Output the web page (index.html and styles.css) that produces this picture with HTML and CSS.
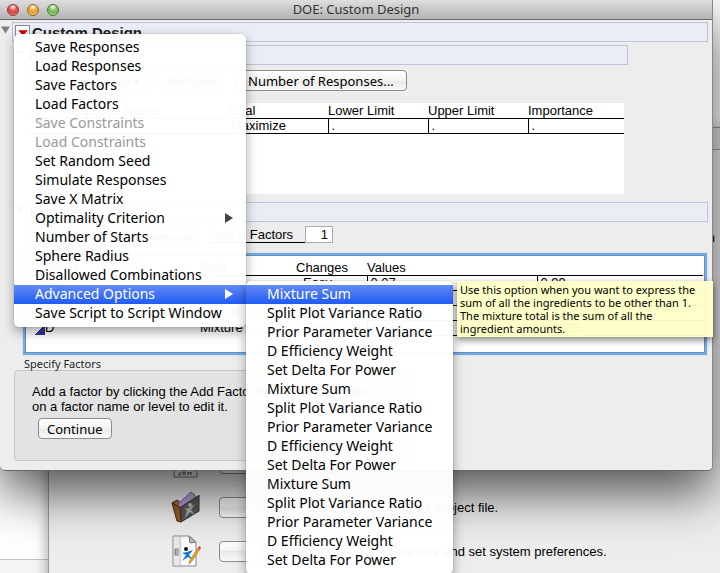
FILE: index.html
```html
<!DOCTYPE html>
<html lang="en">
<head>
  <meta charset="UTF-8" />
  <title>DOE: Custom Design</title>
  <link rel="stylesheet" href="styles.css">
</head>
<body>
<div class="desktop">

  <div class="window notes-window"><div class="notes-footer"></div></div>

  <div class="window starter-window">
    <div class="starter-bar"></div>
    <p class="starter-intro">Click a button to open</p>
    <div class="starter-list">
      <svg class="starter-icon" viewBox="0 0 32 32">
        <path d="M3 1h23v29H3z" fill="#e8e8e8" stroke="#777"/>
        <path d="M9 25v3h-2M12 28v-3h2v3M17 28v-3l2 2 1-2v3" fill="none" stroke="#555"/>
      </svg>
      <button class="mac-button starter-button" aria-label="Open file"></button>
      <span></span>

      <svg class="starter-icon" viewBox="0 0 32 32">
        <path d="M1 12l5-3 4 3v5z" fill="#a5672f" stroke="#4d2c12"/>
        <path d="M7 13L20 1l4 3v9l-14 6z" fill="#b79ad0" stroke="#765b8c"/>
        <path d="M1 12l9 5v14l-4-1z" fill="#955a27" stroke="#4d2c12"/>
        <path d="M10 16l17-11 1-1v16L10 31z" fill="#585858" stroke="#333"/>
        <path d="M13 18l5-1 6-4-4 6 4 5-5-3-5 6 2-8z" fill="#aaa"/>
        <circle cx="19" cy="14" r="2" fill="#bbb"/>
      </svg>
      <button class="mac-button starter-button">Open Project</button>
      <span>Open a project file.</span>

      <svg class="starter-icon" viewBox="0 0 32 32">
        <path d="M2 1h16l7 6v24H2z" fill="#fafafa" stroke="#888"/>
        <path d="M9 1v30" stroke="#aaa"/>
        <path d="M3 2h6v28H3z" fill="#ddd" opacity=".6"/>
        <path d="M4 14h3v6H4zM5 15v4" fill="none" stroke="#777"/>
        <path d="M18 1l1 7 6-1z" fill="#bbb" stroke="#777"/>
        <path d="M11 18l5-1 6-2-4 5 4 5-5-3-6 4 4-6z" fill="#1677d2"/>
        <circle cx="15" cy="14" r="2" fill="#111"/>
        <path d="M18 29l1-4 8-12 2 1-8 12z" fill="#f4a51c" stroke="#a46a12" stroke-width=".6"/>
        <path d="M27 13l1-2 2 1-1 3z" fill="#d9444a"/>
      </svg>
      <button class="mac-button starter-button">Preferences</button>
      <span>Examine and set system preferences.</span>
    </div>
  </div>

  <div class="window design-window">
    <header class="title-bar">
      <span class="lights"><i class="light red"></i><i class="light yellow"></i><i class="light green"></i></span>
      <span class="title-text">DOE: Custom Design</span>
    </header>

    <main class="content">
      <div class="outline">
        <svg class="disclosure" viewBox="0 0 10 10"><path d="M0 1h10L5 9z"/></svg>
        <h1 class="outline-bar">
          <button class="hot-spot" aria-label="Custom Design options"><svg viewBox="0 0 12 12"><path d="M2 4h9L6.500 9z"/></svg></button>
          Custom Design
        </h1>
      </div>

      <section class="group responses">
        <div class="outline">
          <svg class="disclosure" viewBox="0 0 10 10"><path d="M0 1h10L5 9z"/></svg>
          <h2 class="outline-bar">Responses</h2>
        </div>
        <div class="button-row">
          <button class="mac-button add-response">Add Response ▾</button>
          <button class="mac-button remove">Remove</button>
          <button class="mac-button">Number of Responses...</button>
        </div>
        <div class="response-panel">
          <table class="grid">
            <colgroup><col class="response-name"><col class="goal"><col class="limit"><col class="limit"><col></colgroup>
            <thead>
              <tr><th>Response Name</th><th>Goal</th><th>Lower Limit</th><th>Upper Limit</th><th>Importance</th></tr>
            </thead>
            <tbody>
              <tr><td>Y</td><td class="choice">Maximize</td><td class="cell">.</td><td class="cell">.</td><td class="cell">.</td></tr>
            </tbody>
          </table>
        </div>
      </section>

      <section class="group factors">
        <div class="outline">
          <svg class="disclosure" viewBox="0 0 10 10"><path d="M0 1h10L5 9z"/></svg>
          <h2 class="outline-bar">Factors</h2>
        </div>
        <div class="factor-row">
          <button class="mac-button add-factor">Add Factor ▾</button>
          <button class="mac-button remove">Remove</button>
          <label class="count-label" for="count">Add N Factors</label>
          <input class="count" id="count" type="text" value="1">
        </div>
      </section>

      <div class="factor-panel">
        <table class="grid">
          <colgroup><col class="factor-name"><col class="role"><col class="changes"><col class="value"><col></colgroup>
          <thead>
            <tr><th>Name</th><th>Role</th><th>Changes</th><th>Values</th><th></th></tr>
          </thead>
          <tbody>
            <tr><td>A</td><td>Mixture</td><td class="easy">Easy</td><td class="cell">0.07</td><td class="cell">0.99</td></tr>
            <tr><td>B</td><td>Mixture</td><td class="easy">Easy</td><td class="cell">0</td><td class="cell">0.1</td></tr>
            <tr><td>C</td><td>Mixture</td><td class="easy">Easy</td><td class="cell">0</td><td class="cell">0.1</td></tr>
            <tr><td><span class="mark"></span>D</td><td>Mixture</td><td class="easy">Easy</td><td class="cell">0</td><td class="cell">0.0225</td></tr>
          </tbody>
        </table>
      </div>

      <p class="step-title">Specify Factors</p>
      <div class="step-box">
        <p>Add a factor by clicking the Add Factor button. Double click<br>on a factor name or level to edit it.</p>
        <button class="mac-button continue">Continue</button>
      </div>
    </main>
  </div>

  <div class="menu main-menu" role="menu">
    <button role="menuitem">Save Responses</button>
    <button role="menuitem">Load Responses</button>
    <button role="menuitem">Save Factors</button>
    <button role="menuitem">Load Factors</button>
    <button role="menuitem" disabled>Save Constraints</button>
    <button role="menuitem" disabled>Load Constraints</button>
    <button role="menuitem">Set Random Seed</button>
    <button role="menuitem">Simulate Responses</button>
    <button role="menuitem">Save X Matrix</button>
    <button role="menuitem">Optimality Criterion <svg class="arrow" viewBox="0 0 8 10"><path d="M0 0l8 5-8 5z"/></svg></button>
    <button role="menuitem">Number of Starts</button>
    <button role="menuitem">Sphere Radius</button>
    <button role="menuitem">Disallowed Combinations</button>
    <button role="menuitem" class="selected">Advanced Options <svg class="arrow" viewBox="0 0 8 10"><path d="M0 0l8 5-8 5z"/></svg></button>
    <button role="menuitem">Save Script to Script Window</button>
  </div>

  <div class="menu sub-menu" role="menu">
    <button role="menuitem" class="selected">Mixture Sum</button>
    <button role="menuitem">Split Plot Variance Ratio</button>
    <button role="menuitem">Prior Parameter Variance</button>
    <button role="menuitem">D Efficiency Weight</button>
    <button role="menuitem">Set Delta For Power</button>
    <button role="menuitem">Mixture Sum</button>
    <button role="menuitem">Split Plot Variance Ratio</button>
    <button role="menuitem">Prior Parameter Variance</button>
    <button role="menuitem">D Efficiency Weight</button>
    <button role="menuitem">Set Delta For Power</button>
    <button role="menuitem">Mixture Sum</button>
    <button role="menuitem">Split Plot Variance Ratio</button>
    <button role="menuitem">Prior Parameter Variance</button>
    <button role="menuitem">D Efficiency Weight</button>
    <button role="menuitem">Set Delta For Power</button>
  </div>

  <div class="tooltip" role="tooltip">Use this option when you want to express the<br>sum of all the ingredients to be other than 1.<br>The mixture total is the sum of all the<br>ingredient amounts.</div>

</div>
</body>
</html>
```
FILE: styles.css
```css
:root {
  --ui: "Noto Sans", "Open Sans", sans-serif;
  --text: "Liberation Sans", Arial, sans-serif;
  --window: #ededed;
  --bar: #eaedf6;
  --bar-border: #bcc3da;
}

* {
  box-sizing: border-box;
}

body {
  margin: 0;
  font-family: var(--text);
  font-size: 13px;
  line-height: 15px;
  color: #000;
}

h1, h2, p {
  margin: 0;
}

button {
  font-family: var(--ui);
  color: #000;
}

.desktop {
  position: relative;
  min-height: 100vh;
  overflow: hidden;
  background: #fff;
}

.window {
  position: absolute;
}

/* windows at the back */
.notes-window {
  inset: 0;
  display: flex;
  flex-direction: column;
  justify-content: flex-end;
  background: #fff;
}

.notes-footer {
  height: 14px;
  background: #f5f5f5;
  border-top: 1px solid #c4c4c4;
}

.starter-window {
  top: 127px;
  left: 48px;
  right: -20px;
  bottom: -20px;
  background: var(--window);
  border: 1px solid #999;
  box-shadow: 0 4px 14px rgba(0,0,0,0.4);
}

.starter-bar {
  height: 22px;
  background: #e2e2e2;
  border-bottom: 1px solid #999;
}

.starter-intro {
  padding: 80px 24px 0 0;
  text-align: right;
}

.starter-list {
  display: grid;
  grid-template-columns: 32px 154px 1fr;
  grid-auto-rows: 44px;
  align-items: center;
  column-gap: 16px;
  padding: 196px 0 0 122px;
}

.starter-icon {
  width: 32px;
  height: 32px;
}

/* design window */
.design-window {
  top: 0;
  left: 0;
  right: 7px;
  padding-bottom: 9px;
  background: var(--window);
  border-bottom: 1px solid #666;
  border-right: 1px solid #888;
  border-radius: 0 0 5px 5px;
  box-shadow: 0 22px 50px rgba(0,0,0,0.65);
}

.title-bar {
  display: flex;
  align-items: center;
  height: 20px;
  padding: 0 7px;
  background: linear-gradient(#dedede, #b3b3b3);
  border-bottom: 1px solid #696969;
}

.lights {
  display: flex;
  flex: 1;
  gap: 8px;
}

.light {
  width: 12px;
  height: 12px;
  border-radius: 50%;
  border: 1px solid #666;
}

.red {
  background: radial-gradient(circle at 50% 20%, #fff 0, #ec5e5c 35%, #d84444 60%, #ff9d98 100%);
  border-color: #8c3332;
}

.yellow {
  background: radial-gradient(circle at 50% 20%, #fff 0, #f2b04c 35%, #e39c36 60%, #ffe48a 100%);
  border-color: #94652a;
}

.green {
  background: radial-gradient(circle at 50% 20%, #fff 0, #8cc868 35%, #6fb44f 60%, #cdf5a4 100%);
  border-color: #48762f;
}

.title-text {
  font-family: var(--ui);
  font-size: 13px;
  color: #333;
}

.title-bar::after {
  content: "";
  flex: 1;
}

.content {
  padding: 2px 4px 0 1px;
}

.outline {
  display: flex;
  align-items: flex-start;
  gap: 2px;
}

.disclosure {
  width: 9px;
  height: 10px;
  margin-top: 3px;
  fill: #808080;
}

.outline-bar {
  display: flex;
  flex: 1;
  align-items: center;
  gap: 2px;
  height: 20px;
  padding: 0 2px;
  font-size: 15px;
  color: #222;
  background: var(--bar);
  border: 1px solid var(--bar-border);
}

.hot-spot {
  width: 15px;
  height: 15px;
  padding: 0;
  background: #fbfbfb;
  border: 1px solid #888;
}

.hot-spot svg {
  display: block;
  fill: #c00;
}

.group {
  margin-left: 14px;
}

.group h2 {
  font-size: 14px;
}

.responses {
  margin-top: 3px;
  margin-right: 80px;
}

.factors {
  margin-top: 8px;
}

.mac-button {
  height: 21px;
  padding: 0 12px;
  font-size: 13px;
  line-height: 18px;
  white-space: nowrap;
  background: linear-gradient(#fff, #f3f3f3 50%, #e9e9e9 50%, #fafafa);
  border: 1px solid #8c8c8c;
  border-radius: 4px;
}

.button-row {
  display: flex;
  gap: 12px;
  padding: 5px 0 0 15px;
}

.add-response {
  width: 117px;
}

.add-factor {
  width: 96px;
}

.remove {
  width: 64px;
  padding: 0;
}

.response-panel {
  height: 91px;
  margin: 12px 4px 0 15px;
  background: #fff;
}

.grid {
  width: 100%;
  table-layout: fixed;
  border-collapse: collapse;
}

.grid th,
.grid td {
  height: 15px;
  padding: 0;
  font-size: 13px;
  font-weight: normal;
  line-height: 14px;
  text-align: left;
  border-bottom: 1px solid #000;
}

.grid th {
  padding-top: 1px;
}

.grid .cell {
  padding-left: 3px;
  border-left: 1px solid #000;
}

.grid .choice {
  padding-left: 3px;
}

.response-name {
  width: 198px;
}

.goal,
.limit {
  width: 100px;
}

.response-panel th:first-child,
.response-panel td:first-child {
  padding-left: 32px;
}

.factor-row {
  display: flex;
  gap: 10px;
  padding: 4px 0 0 15px;
}

.count-label {
  height: 17px;
  margin-right: -10px;
  padding: 1px 12px 0 0;
  border-bottom: 1px solid #000;
}

.count {
  width: 28px;
  height: 17px;
  padding: 0 4px;
  font-family: var(--text);
  font-size: 13px;
  text-align: right;
  border: 1px solid #aaa;
}

.factor-panel {
  height: 98px;
  margin: 8px 3px 0 24px;
  padding: 4px 1px 0;
  background: #fff;
  border: 1px solid #5f92c4;
  box-shadow: 0 0 1px 2px #79ade0;
}

.factor-panel th:first-child,
.factor-panel td:first-child {
  padding-left: 18px;
}

/* only the value cells are ruled */
.factor-panel td:not(.cell) {
  border-bottom: none;
}

.factor-name {
  width: 173px;
}

.role {
  width: 96px;
}

.changes {
  width: 71px;
}

.value {
  width: 170px;
}

.grid .easy {
  padding-left: 7px;
}

.mark {
  display: inline-block;
  width: 11px;
  height: 11px;
  margin-left: -11px;
  vertical-align: bottom;
  background: linear-gradient(135deg, transparent 50%, #35358c 50%);
}

.step-title {
  margin: 5px 0 0 23px;
  font-family: var(--ui);
  font-size: 11px;
  line-height: 12px;
  color: #222;
}

.step-box {
  width: 400px;
  height: 91px;
  margin-left: 13px;
  padding: 13px 17px;
  background: #e3e3e3;
  border: 1px solid #c6c6c6;
  border-radius: 4px;
}

.continue {
  margin: 4px 0 0 6px;
  padding: 0 8px;
}

/* menus */
.menu {
  position: absolute;
  padding: 4px 0;
  background: rgba(255,255,255,0.97);
  border-radius: 5px;
  box-shadow: 0 5px 12px rgba(0,0,0,0.35), 0 0 1px rgba(0,0,0,0.5);
}

.menu button {
  display: flex;
  align-items: center;
  justify-content: space-between;
  width: 100%;
  height: 19px;
  padding: 0 13px 2px 21px;
  font-size: 14px;
  line-height: 17px;
  white-space: nowrap;
  background: none;
  border: none;
}

.menu button:disabled {
  color: #999;
}

.menu .selected {
  color: #fff;
  background: linear-gradient(#648af5, #1f5bf3);
}

.main-menu {
  top: 34px;
  left: 14px;
  width: 232px;
}

.sub-menu {
  top: 281px;
  left: 246px;
  width: 207px;
}

.arrow {
  width: 8px;
  height: 10px;
  fill: #444;
}

.selected .arrow {
  fill: #fff;
}

.tooltip {
  position: absolute;
  top: 281px;
  left: 457px;
  width: 256px;
  padding: 2px 0 2px 3px;
  font-family: var(--ui);
  font-size: 11px;
  line-height: 13px;
  white-space: nowrap;
  background: rgba(255,255,199,0.97);
  box-shadow: 0 3px 7px rgba(0,0,0,0.5);
}
```
